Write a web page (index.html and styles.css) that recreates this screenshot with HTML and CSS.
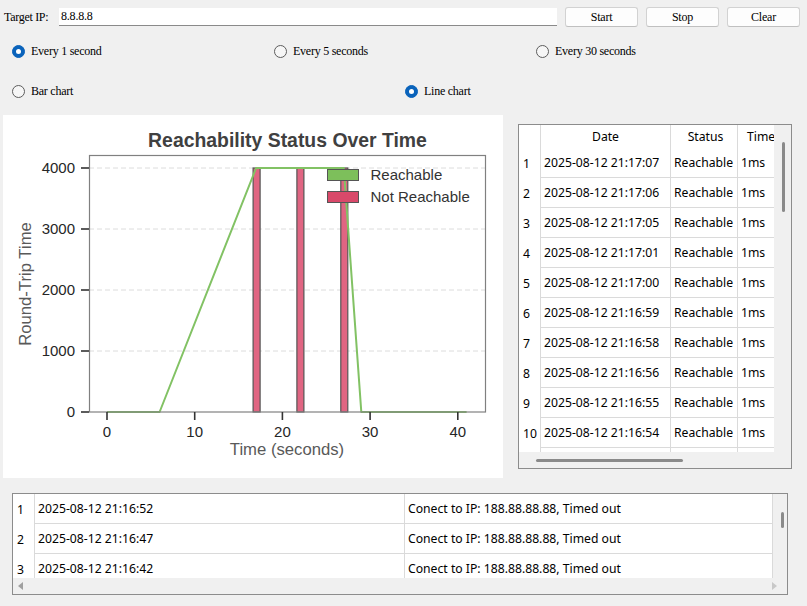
FILE: index.html
```html
<!DOCTYPE html>
<html>
<head>
<meta charset="utf-8">
<link rel="stylesheet" href="styles.css">
</head>
<body>
<div class="app">
  <div class="topbar">
    <span class="lbl">Target IP:</span>
    <div class="ipbox">8.8.8.8</div>
    <button class="btn">Start</button>
    <button class="btn">Stop</button>
    <button class="btn">Clear</button>
  </div>

  <div class="radios r3">
    <label class="radio"><span class="dot on"></span>Every 1 second</label>
    <label class="radio"><span class="dot"></span>Every 5 seconds</label>
    <label class="radio"><span class="dot"></span>Every 30 seconds</label>
  </div>
  <div class="radios r2">
    <label class="radio"><span class="dot"></span>Bar chart</label>
    <label class="radio"><span class="dot on"></span>Line chart</label>
  </div>

  <div class="main">
    <div class="chart">
      <svg width="500" height="363" viewBox="0 0 500 363">
        <text class="title" x="284.5" y="32" text-anchor="middle">Reachability Status Over Time</text>
        <g class="grid">
          <line x1="86" y1="53" x2="482" y2="53"/>
          <line x1="86" y1="114" x2="482" y2="114"/>
          <line x1="86" y1="175" x2="482" y2="175"/>
          <line x1="86" y1="236" x2="482" y2="236"/>
        </g>
        <g class="bars">
          <rect x="250.1" y="53" width="7" height="244"/>
          <rect x="293.9" y="53" width="7" height="244"/>
          <rect x="337.8" y="53" width="7" height="244"/>
        </g>
        <polyline class="line" points="104,297 156.6,297 253.1,53 340.8,53 358.3,297 463.6,297"/>
        <rect class="spine" x="86.5" y="40.5" width="396" height="256.5"/>
        <g class="ticks">
          <line x1="78" y1="53" x2="86" y2="53"/>
          <line x1="78" y1="114" x2="86" y2="114"/>
          <line x1="78" y1="175" x2="86" y2="175"/>
          <line x1="78" y1="236" x2="86" y2="236"/>
          <line x1="78" y1="297" x2="86" y2="297"/>
          <line x1="104" y1="297" x2="104" y2="305"/>
          <line x1="191.7" y1="297" x2="191.7" y2="305"/>
          <line x1="279.4" y1="297" x2="279.4" y2="305"/>
          <line x1="367.1" y1="297" x2="367.1" y2="305"/>
          <line x1="454.8" y1="297" x2="454.8" y2="305"/>
        </g>
        <g class="tl ty">
          <text x="72" y="58">4000</text>
          <text x="72" y="119">3000</text>
          <text x="72" y="180">2000</text>
          <text x="72" y="241">1000</text>
          <text x="72" y="302">0</text>
        </g>
        <g class="tl tx">
          <text x="104" y="321.5">0</text>
          <text x="191.7" y="321.5">10</text>
          <text x="279.4" y="321.5">20</text>
          <text x="367.1" y="321.5">30</text>
          <text x="454.8" y="321.5">40</text>
        </g>
        <text class="axlabel" x="284" y="340" text-anchor="middle">Time (seconds)</text>
        <text class="axlabel" x="0" y="0" text-anchor="middle" transform="translate(27.5 169) rotate(-90)">Round-Trip Time</text>
        <rect class="lg-g" x="324.5" y="54.5" width="31" height="11"/>
        <rect class="lg-r" x="324.5" y="76.5" width="31" height="11"/>
        <text class="lgtext" x="367.5" y="65">Reachable</text>
        <text class="lgtext" x="367.5" y="86.5">Not Reachable</text>
      </svg>
    </div>

    <div class="tbl side">
      <div class="vp">
        <div class="row head">
          <div class="c num"></div>
          <div class="c date center">Date</div>
          <div class="c status center">Status</div>
          <div class="c time center">Time</div>
        </div>
        <div class="row"><div class="c num">1</div><div class="c date">2025-08-12 21:17:07</div><div class="c status">Reachable</div><div class="c time">1ms</div></div>
        <div class="row"><div class="c num">2</div><div class="c date">2025-08-12 21:17:06</div><div class="c status">Reachable</div><div class="c time">1ms</div></div>
        <div class="row"><div class="c num">3</div><div class="c date">2025-08-12 21:17:05</div><div class="c status">Reachable</div><div class="c time">1ms</div></div>
        <div class="row"><div class="c num">4</div><div class="c date">2025-08-12 21:17:01</div><div class="c status">Reachable</div><div class="c time">1ms</div></div>
        <div class="row"><div class="c num">5</div><div class="c date">2025-08-12 21:17:00</div><div class="c status">Reachable</div><div class="c time">1ms</div></div>
        <div class="row"><div class="c num">6</div><div class="c date">2025-08-12 21:16:59</div><div class="c status">Reachable</div><div class="c time">1ms</div></div>
        <div class="row"><div class="c num">7</div><div class="c date">2025-08-12 21:16:58</div><div class="c status">Reachable</div><div class="c time">1ms</div></div>
        <div class="row"><div class="c num">8</div><div class="c date">2025-08-12 21:16:56</div><div class="c status">Reachable</div><div class="c time">1ms</div></div>
        <div class="row"><div class="c num">9</div><div class="c date">2025-08-12 21:16:55</div><div class="c status">Reachable</div><div class="c time">1ms</div></div>
        <div class="row"><div class="c num">10</div><div class="c date">2025-08-12 21:16:54</div><div class="c status">Reachable</div><div class="c time">1ms</div></div>
        <div class="row"><div class="c num"></div><div class="c date"></div><div class="c status"></div><div class="c time"></div></div>
      </div>
      <div class="vscroll"><div class="vthumb"></div></div>
      <div class="hscroll"><div class="hthumb"></div></div>
      <div class="corner"></div>
    </div>
  </div>

  <div class="tbl log">
    <div class="vp">
      <div class="row"><div class="c num">1</div><div class="c ldate">2025-08-12 21:16:52</div><div class="c msg">Conect to IP: 188.88.88.88, Timed out</div></div>
      <div class="row"><div class="c num">2</div><div class="c ldate">2025-08-12 21:16:47</div><div class="c msg">Conect to IP: 188.88.88.88, Timed out</div></div>
      <div class="row"><div class="c num">3</div><div class="c ldate">2025-08-12 21:16:42</div><div class="c msg">Conect to IP: 188.88.88.88, Timed out</div></div>
    </div>
    <div class="vscroll"><div class="vthumb small"></div></div>
    <div class="hscroll arrows"><span class="arr left"></span><span class="arr right"></span></div>
    <div class="corner"></div>
  </div>
</div>
</body>
</html>
```

FILE: styles.css
```css
* { box-sizing: border-box; }
html, body { margin: 0; padding: 0; }
body {
  width: 807px;
  height: 606px;
  overflow: hidden;
  background: #f0f0f0;
  font-family: "Liberation Serif", "Times New Roman", serif;
  font-size: 12px;
  color: #000;
}
.app { width: 807px; height: 606px; }

.topbar {
  display: flex;
  align-items: center;
  height: 34px;
  padding-left: 4px;
}
.lbl { width: 55px; letter-spacing: -0.3px; }
.ipbox {
  width: 498px;
  height: 18px;
  background: #fff;
  border-bottom: 1px solid #8a8a8a;
  padding-left: 2px;
  line-height: 17px;
  letter-spacing: -0.2px;
}
.btn {
  width: 73px;
  height: 20px;
  margin-left: 8px;
  background: #fdfdfd;
  border: 1px solid #d2d2d2;
  border-bottom-color: #c0c0c0;
  border-radius: 3px;
  font-family: "Liberation Serif", "Times New Roman", serif;
  font-size: 12px;
  letter-spacing: -0.2px;
  padding: 0;
  color: #000;
}

.radios {
  display: grid;
  padding-left: 12px;
  align-items: center;
}
.r3 { grid-template-columns: repeat(3, 262px); height: 35px; }
.r2 { grid-template-columns: repeat(2, 393px); height: 45px; }
.radio {
  display: flex;
  align-items: center;
  letter-spacing: -0.25px;
}
.dot {
  width: 13px;
  height: 13px;
  border-radius: 50%;
  border: 1px solid #5c5c5c;
  background: #f6f6f6;
  margin-right: 6px;
  flex: none;
  position: relative;
}
.dot.on {
  background: #0a63bb;
  border-color: #0a63bb;
}
.dot.on::after {
  content: "";
  position: absolute;
  left: 3px;
  top: 3px;
  width: 5px;
  height: 5px;
  border-radius: 50%;
  background: #fff;
}

.main {
  display: flex;
  align-items: flex-start;
  margin-top: 1px;
  height: 363px;
}
.chart {
  margin-left: 3px;
  width: 500px;
  height: 363px;
  background: #fff;
}
.chart svg { display: block; font-family: "Liberation Sans", Arial, sans-serif; }
.title { font-size: 19.4px; font-weight: bold; fill: #404040; }
.grid line { stroke: #dcdcdc; stroke-width: 1; stroke-dasharray: 5 3; }
.bars rect { fill: #e06582; stroke: #555; stroke-width: 1.2; }
.line { fill: none; stroke: #82c264; stroke-width: 2; stroke-linejoin: round; }
.spine { fill: none; stroke: #808080; stroke-width: 1.2; }
.ticks line { stroke: #333; stroke-width: 1.6; }
.tl text { font-size: 15px; fill: #262626; }
.ty text { text-anchor: end; }
.tx text { text-anchor: middle; }
.axlabel { font-size: 16.7px; fill: #595959; }
.lg-g { fill: #7dbf5b; stroke: #555; stroke-width: 1; }
.lg-r { fill: #d9496a; stroke: #555; stroke-width: 1; }
.lgtext { font-size: 15px; fill: #333; }

.tbl {
  display: grid;
  border: 1px solid #8c8c8c;
  background: #f0f0f0;
  font-family: "Noto Sans", "Segoe UI", sans-serif;
  font-size: 12.2px;
  color: #000;
}
.side {
  margin-left: 15px;
  margin-top: 9px;
  width: 274px;
  height: 345px;
  grid-template-columns: 255px 17px;
  grid-template-rows: 327px 16px;
}
.log {
  margin-left: 12px;
  margin-top: 15px;
  width: 776px;
  height: 102px;
  grid-template-columns: 760px 14px;
  grid-template-rows: 84px 16px;
}
.vp {
  background: #fff;
  overflow: hidden;
}
.row {
  display: flex;
  height: 30px;
}
.row.head { height: 23px; }
.c {
  flex: none;
  display: flex;
  align-items: center;
  white-space: nowrap;
  overflow: hidden;
  border-right: 1px solid #dadada;
  border-bottom: 1px solid #dadada;
  padding-left: 3px;
}
.c.num { border-bottom: none; padding-left: 4px; }
.head .c { border-bottom: none; }
.c.center { justify-content: center; padding-left: 0; }
.side .num { width: 22px; }
.side .date { width: 130px; }
.side .status { width: 67px; padding-left: 3px; }
.side .time { width: 54px; padding-left: 3px; }
.side .head .time { justify-content: flex-start; padding-left: 9px; }
.log .num { width: 22px; }
.log .ldate { width: 370px; }
.log .msg { width: 368px; }

.vscroll { position: relative; background: #f0f0f0; }
.vthumb {
  position: absolute;
  left: 8px;
  top: 17px;
  width: 3px;
  height: 70px;
  border-radius: 2px;
  background: #8a8a8a;
}
.vthumb.small { left: 8px; top: 18px; height: 16px; }
.hscroll { position: relative; background: #f0f0f0; }
.hthumb {
  position: absolute;
  left: 17px;
  top: 7px;
  width: 147px;
  height: 3px;
  border-radius: 2px;
  background: #8a8a8a;
}
.arrows { display: flex; align-items: center; justify-content: space-between; padding: 0 5px 0 5px; }
.arr { width: 0; height: 0; border-top: 4px solid transparent; border-bottom: 4px solid transparent; }
.arr.left { border-right: 5px solid #a0a0a0; }
.arr.right { border-left: 5px solid #c8c8c8; margin-right: -9px; }
.corner { background: #f0f0f0; }
```
